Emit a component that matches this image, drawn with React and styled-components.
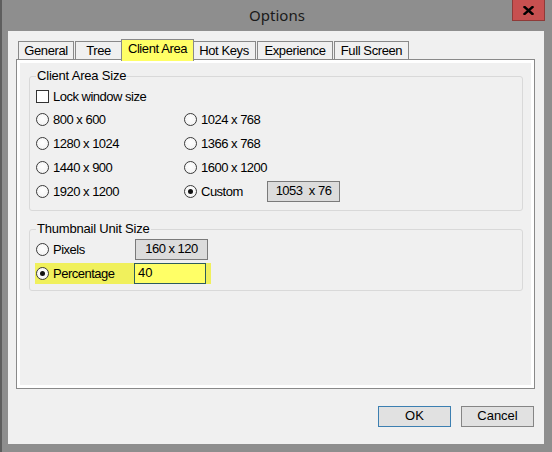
import React from "react";
import styled, { createGlobalStyle } from "styled-components";

const GlobalStyle = createGlobalStyle`
  html, body {
    margin: 0;
    padding: 0;
  }
  body {
    font-family: "Liberation Sans", Arial, sans-serif;
    font-size: 13px;
    color: #000;
  }
`;

const Window = styled.div`
  width: 552px;
  height: 452px;
  box-sizing: border-box;
  background: #8e8e8e;
  border-left: 2px solid #5e5e5e;
  padding: 0 8px 8px 6px;
  display: flex;
  flex-direction: column;
`;

const TitleBar = styled.div`
  position: relative;
  height: 31px;
  margin: 0 -8px 0 -6px;
  display: flex;
  align-items: center;
  justify-content: center;
  padding-bottom: 2px;
  box-sizing: border-box;
  font-family: "Noto Sans", "Liberation Sans", sans-serif;
  font-size: 15px;
  color: #1a1a1a;
`;

const CloseButton = styled.div`
  position: absolute;
  top: 0;
  right: 7px;
  width: 33px;
  height: 21px;
  box-sizing: border-box;
  background: #c75050;
  border: 1px solid #8f3a38;
  border-top: none;
  display: flex;
  align-items: center;
  justify-content: center;
`;

const Client = styled.div`
  flex: 1;
  background: #f0f0f0;
  padding: 8px 9px 17px 8px;
  display: flex;
  flex-direction: column;
`;

const TabRow = styled.div`
  display: flex;
  align-items: flex-end;
  height: 20px;
  padding-left: 2px;
`;

const Tab = styled.div`
  width: ${(p) => p.$w}px;
  height: ${(p) => (p.$active ? 22 : 18)}px;
  box-sizing: border-box;
  margin: ${(p) => (p.$active ? "0 -2px -2px" : "0 1px 0 0")};
  padding-bottom: ${(p) => (p.$active ? 4 : 1)}px;
  position: relative;
  z-index: ${(p) => (p.$active ? 1 : 0)};
  background: ${(p) => (p.$active ? "#ffff66" : "#f0f0f0")};
  border: 1px solid #898989;
  border-bottom: none;
  display: flex;
  align-items: center;
  justify-content: center;
  letter-spacing: -0.4px;
  white-space: nowrap;
`;

const Panel = styled.div`
  flex: 1;
  border: 1px solid #898989;
  box-shadow: inset 0 0 0 3px #fff;
  padding: 8px 11px 0 12px;
  display: flex;
  flex-direction: column;
`;

const Group = styled.fieldset`
  margin: ${(p) => (p.$first ? 0 : "10px 0 0")};
  min-width: 0;
  border: 1px solid #d9d9d9;
  border-radius: 3px;
  padding: 0 6px ${(p) => p.$pb}px 6px;
`;

const Legend = styled.legend`
  padding: 0 1px;
  line-height: 16px;
  letter-spacing: -0.2px;
`;

const CheckRow = styled.div`
  display: flex;
  align-items: center;
  height: 22px;
  margin-top: 1px;
  gap: 4px;
  letter-spacing: -0.5px;
`;

const CheckBox = styled.span`
  width: 13px;
  height: 13px;
  box-sizing: border-box;
  border: 1px solid #333;
  background: #fff;
  flex-shrink: 0;
`;

const SizeGrid = styled.div`
  display: grid;
  grid-template-columns: 148px 1fr;
  grid-auto-rows: 24px;
`;

const Row = styled.div`
  display: flex;
  align-items: center;
  height: 24px;
`;

const Choice = styled.label`
  display: flex;
  align-items: center;
  gap: 4px;
  width: ${(p) => (p.$w ? `${p.$w}px` : "auto")};
  flex-shrink: 0;
  letter-spacing: -0.5px;
  white-space: nowrap;
`;

const Radio = styled.span`
  width: 13px;
  height: 13px;
  box-sizing: border-box;
  border-radius: 50%;
  border: 1px solid #3a3a3a;
  background: radial-gradient(circle at 50% 40%, #ffffff 0%, #f4f4f4 70%, #e6e6e6 100%);
  display: flex;
  align-items: center;
  justify-content: center;
  flex-shrink: 0;

  &::after {
    content: "";
    display: ${(p) => (p.$checked ? "block" : "none")};
    width: 5px;
    height: 5px;
    border-radius: 50%;
    background: #111;
  }
`;

const ValueBox = styled.div`
  width: 73px;
  height: 21px;
  box-sizing: border-box;
  background: #dcdcdc;
  border: 1px solid #7a7a7a;
  display: flex;
  align-items: center;
  justify-content: center;
  padding-bottom: 2px;
  white-space: pre;
  letter-spacing: -0.5px;
`;

const Highlight = styled.div`
  display: flex;
  align-items: center;
  height: 21px;
  margin-left: -1px;
  padding: 0 5px 0 1px;
  background: #f0f05c;
`;

const TextField = styled.div`
  width: 72px;
  height: 21px;
  box-sizing: border-box;
  background: #ffff66;
  border: 1px solid #2d5c5c;
  padding: 0 3px 2px;
  display: flex;
  align-items: center;
`;

const ButtonRow = styled.div`
  display: flex;
  justify-content: flex-end;
  gap: 10px;
  margin-top: 17px;
  padding-right: 1px;
`;

const Button = styled.div`
  width: 73px;
  height: 21px;
  box-sizing: border-box;
  background: #e1e1e1;
  border: 1px solid ${(p) => (p.$default ? "#3c7fb1" : "#858585")};
  display: flex;
  align-items: center;
  justify-content: center;
  padding-bottom: 3px;
`;

const tabs = [
  { label: "General", w: 56 },
  { label: "Tree", w: 47 },
  { label: "Client Area", w: 73, active: true },
  { label: "Hot Keys", w: 64 },
  { label: "Experience", w: 76 },
  { label: "Full Screen", w: 75 },
];

const sizes = [
  ["800 x 600", "1024 x 768"],
  ["1280 x 1024", "1366 x 768"],
  ["1440 x 900", "1600 x 1200"],
];

export default function App() {
  return (
    <>
      <GlobalStyle />
      <Window>
        <TitleBar>
          Options
          <CloseButton>
            <svg width="11" height="9" viewBox="0 0 11 9">
              <path d="M1.5 1 L9.5 8 M9.5 1 L1.5 8" stroke="#000" strokeWidth="2.4" strokeLinecap="square" />
            </svg>
          </CloseButton>
        </TitleBar>
        <Client>
          <TabRow>
            {tabs.map((t) => (
              <Tab key={t.label} $w={t.w} $active={t.active}>
                {t.label}
              </Tab>
            ))}
          </TabRow>
          <Panel>
            <Group $first $pb={7}>
              <Legend>Client Area Size</Legend>
              <CheckRow>
                <CheckBox />
                Lock window size
              </CheckRow>
              <SizeGrid>
                {sizes.map(([a, b]) => (
                  <React.Fragment key={a}>
                    <Choice>
                      <Radio />
                      {a}
                    </Choice>
                    <Choice>
                      <Radio />
                      {b}
                    </Choice>
                  </React.Fragment>
                ))}
                <Choice>
                  <Radio />
                  1920 x 1200
                </Choice>
                <Row>
                  <Choice $w={83}>
                    <Radio $checked />
                    Custom
                  </Choice>
                  <ValueBox>1053  x 76</ValueBox>
                </Row>
              </SizeGrid>
            </Group>
            <Group $pb={5}>
              <Legend>Thumbnail Unit Size</Legend>
              <Row>
                <Choice $w={99}>
                  <Radio />
                  Pixels
                </Choice>
                <ValueBox>160 x 120</ValueBox>
              </Row>
              <Row>
                <Highlight>
                  <Choice $w={98}>
                    <Radio $checked />
                    Percentage
                  </Choice>
                  <TextField>40</TextField>
                </Highlight>
              </Row>
            </Group>
          </Panel>
          <ButtonRow>
            <Button $default>OK</Button>
            <Button>Cancel</Button>
          </ButtonRow>
        </Client>
      </Window>
    </>
  );
}
